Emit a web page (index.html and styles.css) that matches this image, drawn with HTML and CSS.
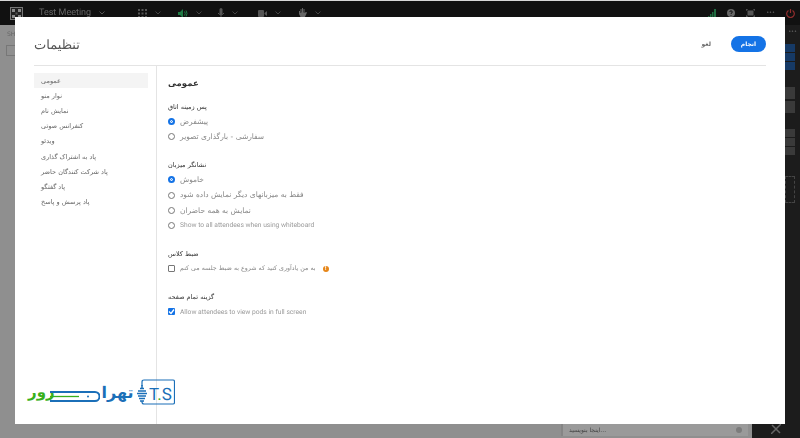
FILE: index.html
```html
<!DOCTYPE html>
<html lang="fa">
<head>
    <meta charset="UTF-8">
    <meta name="viewport" content="width=device-width, initial-scale=1.0">
    <title>Test Meeting</title>
    <link rel="stylesheet" href="styles.css">
</head>
<body>
    <div class="app">
        <header class="topbar">
            <svg class="app-logo" width="13" height="13" viewBox="0 0 13 13">
                <rect x="0.5" y="0.5" width="12" height="12" fill="#222" stroke="#777"/>
                <path d="M2 2h3v3H2zM8 2h3v3H8zM2 8h3v3H2zM8 8h3v3H8z" fill="#8a8a8a"/>
                <path d="M5.5 5.5h2v2h-2z" fill="#555"/>
            </svg>
            <span class="meeting-name">Test Meeting</span>
            <svg class="chev chev-title" width="6" height="4" viewBox="0 0 6 4"><path d="M.5.5 3 3 5.500.5" fill="none" stroke="#555"/></svg>
            <div class="tools">
                <div class="tool">
                    <svg width="9" height="9" viewBox="0 0 9 9"><path d="M0 0h2v2H0zM3.500 0h2v2h-2zM7 0h2v2H7zM0 3.500h2v2H0zM3.500 3.500h2v2h-2zM7 3.500h2v2H7zM0 7h2v2H0zM3.500 7h2v2h-2zM7 7h2v2H7z" fill="#555"/></svg>
                    <svg class="chev" width="6" height="4" viewBox="0 0 6 4"><path d="M.5.5 3 3 5.500.5" fill="none" stroke="#444"/></svg>
                </div>
                <div class="tool">
                    <svg width="10" height="9" viewBox="0 0 10 9"><path d="M0 3h2l3-3v9L2 6H0z" fill="#1f7a45"/><path d="M6.500 2.500q1.500 2 0 4M8 1.500q2 3 0 6" fill="none" stroke="#1f7a45"/></svg>
                    <svg class="chev" width="6" height="4" viewBox="0 0 6 4"><path d="M.5.5 3 3 5.500.5" fill="none" stroke="#444"/></svg>
                </div>
                <div class="tool">
                    <svg width="6" height="10" viewBox="0 0 6 10"><rect x="1.500" width="3" height="7" rx="1.500" fill="#555"/><path d="M0 5q3 4 6 0M3 7v3" fill="none" stroke="#555"/></svg>
                    <svg class="chev" width="6" height="4" viewBox="0 0 6 4"><path d="M.5.5 3 3 5.500.5" fill="none" stroke="#444"/></svg>
                </div>
                <div class="tool">
                    <svg width="9" height="7" viewBox="0 0 9 7"><rect width="6" height="7" rx="1" fill="#555"/><path d="M6.500 3 9 1v5L6.500 4z" fill="#555"/></svg>
                    <svg class="chev" width="6" height="4" viewBox="0 0 6 4"><path d="M.5.5 3 3 5.500.5" fill="none" stroke="#444"/></svg>
                </div>
                <div class="tool">
                    <svg width="9" height="10" viewBox="0 0 9 10"><path d="M1 3h1v2h.5V1h1v3.500H4V0h1v4.500h.5V1h1v4L8 4l1 .5L6.500 10H3L1 6z" fill="#666"/></svg>
                    <svg class="chev" width="6" height="4" viewBox="0 0 6 4"><path d="M.5.5 3 3 5.500.5" fill="none" stroke="#444"/></svg>
                </div>
            </div>
            <div class="status">
                <svg width="8" height="9" viewBox="0 0 8 9"><path d="M0 7h1.500v2H0zM2 5h1.500v4H2zM4 3h1.500v6H4zM6 0h2v9H6z" fill="#1f6b40"/></svg>
                <svg width="8" height="8" viewBox="0 0 8 8"><circle cx="4" cy="4" r="4" fill="#666"/><path d="M2.800 3q0-1.200 1.200-1.200T5.200 3 4 4.500V5M4 6v.800" fill="none" stroke="#111"/></svg>
                <svg width="9" height="8" viewBox="0 0 9 8"><rect x="1.500" y="1.500" width="6" height="5" fill="#555"/><path d="M0 2V0h2M7 0h2v2M9 6v2H7M2 8H0V6" fill="none" stroke="#666"/></svg>
                <span class="dots">•••</span>
                <svg width="9" height="9" viewBox="0 0 9 9"><path d="M2.500 1.500a3.800 3.800 0 1 0 4 0M4.500 0v4" fill="none" stroke="#8f2d2d" stroke-width="1.200"/></svg>
            </div>
        </header>

        <div class="stage">
            <main class="main">
                <div class="pod-head">SH</div>
                <div class="pod-field"></div>
                <div class="chat-row">
                    <div class="chat-input">
                        <span>اینجا بنویسید...</span>
                        <i class="chat-dot"></i>
                    </div>
                </div>
            </main>
            <aside class="side">
                <div class="side-dots">•••</div>
                <div class="side-group">
                    <div class="side-cell blue"></div>
                    <div class="side-cell blue"></div>
                    <div class="side-cell blue"></div>
                </div>
                <div class="side-group tall">
                    <div class="side-cell gray"></div>
                    <div class="side-cell gray"></div>
                </div>
                <div class="side-group">
                    <div class="side-cell gray"></div>
                    <div class="side-cell gray"></div>
                    <div class="side-cell gray"></div>
                </div>
                <div class="side-dashed"></div>
                <svg class="wrench" width="10" height="10" viewBox="0 0 10 10"><path d="M0 10 10 0M1 1l8 8" stroke="#666" stroke-width="1.500"/></svg>
            </aside>
        </div>
    </div>

    <section class="dialog">
        <div class="dialog-head">
            <h1>تنظیمات</h1>
            <div class="dialog-actions">
                <button class="btn-cancel">لغو</button>
                <button class="btn-done">انجام</button>
            </div>
        </div>
        <div class="dialog-body">
            <nav class="nav">
                <a class="nav-item active">عمومی</a>
                <a class="nav-item">نوار منو</a>
                <a class="nav-item">نمایش نام</a>
                <a class="nav-item">کنفرانس صوتی</a>
                <a class="nav-item">ویدئو</a>
                <a class="nav-item">پاد به اشتراک گذاری</a>
                <a class="nav-item">پاد شرکت کنندگان حاضر</a>
                <a class="nav-item">پاد گفتگو</a>
                <a class="nav-item">پاد پرسش و پاسخ</a>
            </nav>
            <div class="panel">
                <h2>عمومی</h2>

                <div class="group">
                    <h3>پس زمینه اتاق</h3>
                    <div class="opt"><i class="radio on"></i><span>پیشفرض</span></div>
                    <div class="opt"><i class="radio"></i><span>سفارشی - بارگذاری تصویر</span></div>
                </div>

                <div class="group">
                    <h3>نشانگر میزبان</h3>
                    <div class="opt"><i class="radio on"></i><span>خاموش</span></div>
                    <div class="opt"><i class="radio"></i><span>فقط به میزبانهای دیگر نمایش داده شود</span></div>
                    <div class="opt"><i class="radio"></i><span>نمایش به همه حاضران</span></div>
                    <div class="opt"><i class="radio"></i><span class="latin">Show to all attendees when using whiteboard</span></div>
                </div>

                <div class="group">
                    <h3>ضبط کلاس</h3>
                    <div class="opt"><i class="check"></i><span class="small">به من یادآوری کنید که شروع به ضبط جلسه می کنم</span><i class="info">!</i></div>
                </div>

                <div class="group">
                    <h3>گزینه تمام صفحه</h3>
                    <div class="opt">
                        <i class="check on"><svg width="7" height="7" viewBox="0 0 7 7"><path d="M1 3.500 3 5.500 6 1.500" fill="none" stroke="#fff" stroke-width="1.300"/></svg></i>
                        <span class="latin">Allow attendees to view pods in full screen</span>
                    </div>
                </div>
            </div>
        </div>
    </section>

    <!-- watermark sits over the dialog -->
    <div class="brand">
        <span class="brand-green">رور</span>
        <svg class="brand-bar" width="50" height="11" viewBox="0 0 50 11">
            <path d="M0 1H45a4.500 4.500 0 0 1 0 9H0" fill="none" stroke="#1b6fb8" stroke-width="2"/>
            <path d="M0 5.500H29" stroke="#38b01c" stroke-width="1.300"/>
            <circle cx="38" cy="5.500" r="1" fill="#1b6fb8"/>
        </svg>
        <span class="brand-blue">تهرا</span>
        <svg class="brand-mark" width="40" height="27" viewBox="0 0 40 27">
            <path d="M7 7V3q0-2 2-2h29q1.500 0 1.500 1.500v21q0 1.500-1.500 1.500H9q-2 0-2-2v-1" fill="none" stroke="#1b6fb8" stroke-width="1.200"/>
            <path d="M7 6v3M5 9.500h4M3 12h8M2 14.500h10M3 17h8M4 19.500h6M5 22h4" stroke="#1b6fb8" stroke-width="1.500"/>
            <text x="14" y="21" class="brand-ts">T<tspan class="brand-dot">.</tspan>S</text>
        </svg>
    </div>
</body>
</html>
```

FILE: styles.css
```css
* {
    box-sizing: border-box;
}

html, body {
    margin: 0;
    padding: 0;
    width: 800px;
    height: 438px;
    overflow: hidden;
}

body {
    position: relative;
    font-family: "DejaVu Sans", Roboto, sans-serif;
    background: #1a1a1a;
    text-rendering: geometricPrecision;
}

.app {
    display: flex;
    flex-direction: column;
    height: 438px;
    border-top: 1px solid #d8d8d8;
    filter: blur(0.4px);
}

/* top bar */
.topbar {
    display: flex;
    align-items: center;
    height: 24px;
    padding: 0 5px 0 10px;
    background: #111;
}

.meeting-name {
    margin-left: 16px;
    font-family: Roboto, sans-serif;
    font-size: 9px;
    color: #666;
}

.chev-title {
    margin-left: 8px;
}

.tools {
    display: flex;
    align-items: center;
    gap: 14px;
    margin-left: 33px;
}

.tool {
    display: flex;
    align-items: center;
    gap: 8px;
    min-width: 26px;
}

.status {
    display: flex;
    align-items: center;
    gap: 11px;
    margin-left: auto;
}

.dots {
    font-size: 5px;
    color: #666;
}

/* dimmed page behind the dialog */
.stage {
    display: flex;
    flex: 1;
}

.main {
    display: flex;
    flex-direction: column;
    flex: 1;
    padding-top: 6px;
    background: #8f8f8f;
}

.pod-head {
    padding-left: 7px;
    font-size: 6px;
    color: #666;
}

.pod-field {
    width: 12px;
    height: 11px;
    margin: 7px 0 0 6px;
    border: 1px solid #777;
}

.chat-row {
    display: flex;
    justify-content: flex-end;
    margin-top: auto;
    padding: 0 4px 2px 0;
}

.chat-input {
    display: flex;
    align-items: center;
    justify-content: space-between;
    width: 187px;
    height: 12px;
    padding: 0 6px;
    background: #9a9a9a;
    border-left: 2px solid #858585;
    font-size: 6px;
    color: #444;
}

.chat-dot {
    width: 6px;
    height: 6px;
    border-radius: 50%;
    background: #7c7c7c;
}

.side {
    position: relative;
    width: 48px;
    padding: 19px 5px 0 33px;
    background: #1c1c1c;
}

.side-dots {
    position: absolute;
    top: 4px;
    right: 3px;
    font-size: 5px;
    color: #666;
}

.side-group {
    display: flex;
    flex-direction: column;
    gap: 1px;
    margin-bottom: 17px;
}

.side-group.tall {
    gap: 2px;
    margin-bottom: 16px;
}

.side-cell {
    height: 8px;
}

.side-cell.blue {
    background: #163a66;
}

.side-cell.gray {
    background: #3a3a3a;
}

.tall .side-cell {
    height: 12px;
}

.side-dashed {
    height: 27px;
    margin-top: 21px;
    border: 1px dashed #444;
}

.wrench {
    position: absolute;
    right: 19px;
    bottom: 4px;
}

/* dialog */
.dialog {
    position: absolute;
    left: 15px;
    top: 17px;
    display: flex;
    flex-direction: column;
    width: 770px;
    height: 407px;
    padding: 0 19px;
    background: #fff;
    filter: blur(0.3px);
}

.dialog-head {
    display: flex;
    align-items: center;
    justify-content: space-between;
    height: 49px;
    padding-top: 5px;
    border-bottom: 1px solid #e4e4e4;
}

h1 {
    margin: 3px 0 0;
    font-size: 13px;
    font-weight: 400;
    color: #555;
}

.dialog-actions {
    display: flex;
    align-items: center;
    gap: 20px;
}

button {
    border: none;
    font-family: inherit;
    font-size: 6px;
    font-weight: 700;
    cursor: pointer;
}

.btn-cancel {
    padding: 0;
    background: none;
    color: #666;
}

.btn-done {
    width: 35px;
    height: 16px;
    padding: 0;
    border-radius: 8px;
    background: #1473e6;
    color: #fff;
}

.dialog-body {
    display: flex;
    flex: 1;
}

.nav {
    display: flex;
    flex-direction: column;
    width: 123px;
    padding: 7px 8px 0 0;
    border-right: 1px solid #e4e4e4;
}

.nav-item {
    display: flex;
    align-items: center;
    height: 15.200px;
    padding-left: 7px;
    font-size: 6.500px;
    color: #666;
}

.nav-item.active {
    background: #f4f4f4;
}

.panel {
    padding: 10px 0 0 11px;
}

h2 {
    margin: 0 0 8px;
    height: 16px;
    font-size: 8.500px;
    font-weight: 700;
    line-height: 16px;
    color: #333;
}

h3 {
    margin: 0;
    height: 14px;
    font-size: 6.500px;
    font-weight: 400;
    line-height: 15px;
    color: #333;
}

.group {
    margin-bottom: 14px;
}

.opt {
    display: flex;
    align-items: center;
    gap: 5px;
    height: 15.200px;
    color: #888;
}

.opt span {
    font-size: 7.500px;
    line-height: 1;
}

.opt .latin {
    font-family: Roboto, sans-serif;
    font-size: 6.700px;
    color: #999;
}

.opt .small {
    font-size: 6.300px;
}

.radio {
    width: 7px;
    height: 7px;
    border: 1px solid #777;
    border-radius: 50%;
}

.radio.on {
    border: 2px solid #1473e6;
    background: #1473e6;
    box-shadow: inset 0 0 0 1px #fff;
}

.check {
    display: flex;
    align-items: center;
    justify-content: center;
    width: 7px;
    height: 7px;
    border: 1px solid #777;
    border-radius: 1px;
}

.check.on {
    border: none;
    background: #1473e6;
}

.info {
    width: 6px;
    height: 6px;
    margin-left: 2px;
    border-radius: 50%;
    background: #e68619;
    color: #fff;
    font-size: 5px;
    font-style: normal;
    font-weight: 700;
    line-height: 6px;
    text-align: center;
}

/* watermark */
.brand {
    position: absolute;
    left: 28px;
    top: 379px;
    display: flex;
    align-items: center;
    height: 27px;
}

.brand-green {
    width: 22px;
    font-size: 15px;
    font-weight: 700;
    line-height: 27px;
    color: #38b01c;
}

.brand-bar {
    margin-top: 8px;
}

.brand-blue {
    width: 35px;
    font-size: 16px;
    font-weight: 700;
    line-height: 27px;
    text-align: center;
    color: #1b6fb8;
}

.brand-ts {
    font-family: Roboto, sans-serif;
    font-size: 17px;
    fill: #1b6fb8;
}

.brand-dot {
    fill: #38b01c;
}
```
